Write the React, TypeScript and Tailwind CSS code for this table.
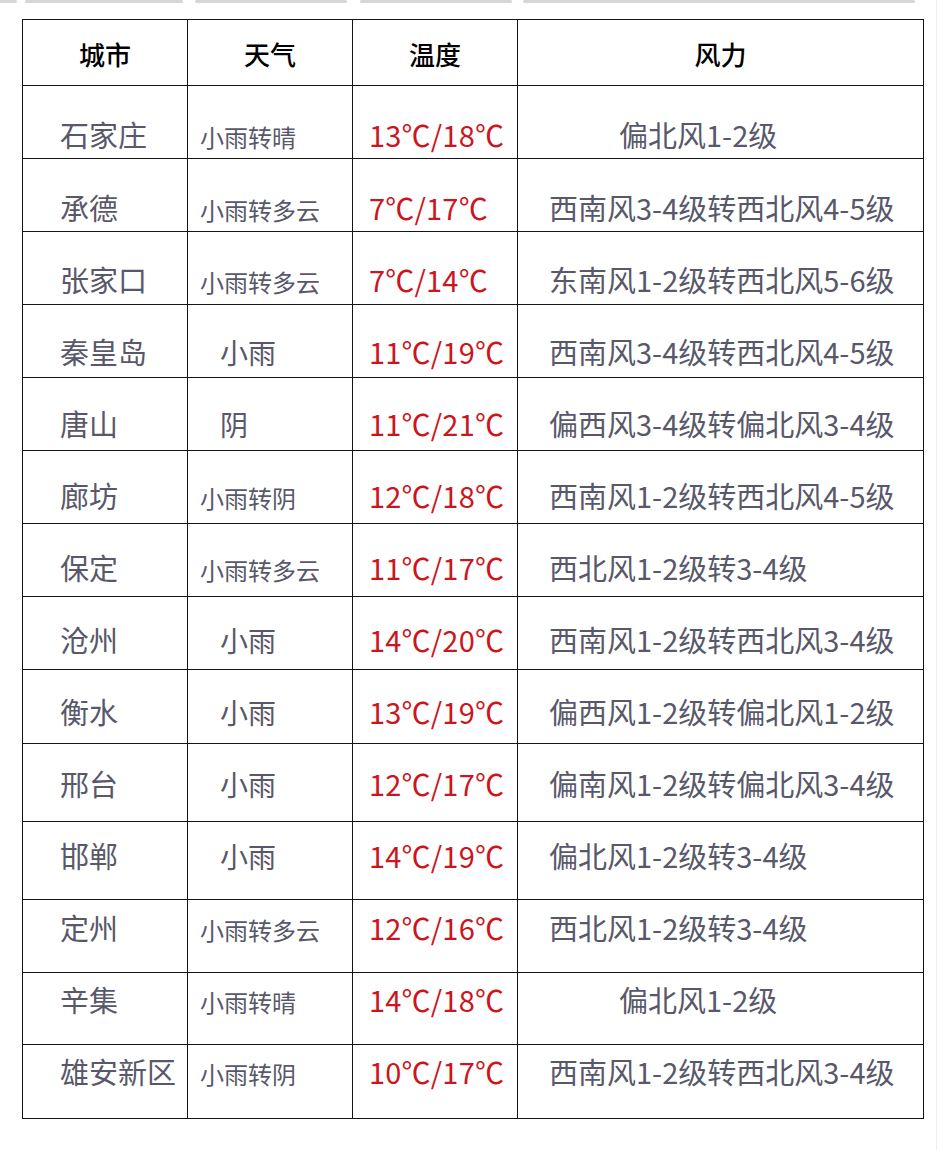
type Row = {
  city: string
  weather: string
  temp: string
  wind: string
  h: string
  pt: string
}

const rows: Row[] = [
  { city: '石家庄', weather: '小雨转晴', temp: '13℃/18℃', wind: '偏北风1-2级', h: 'h-[73px]', pt: 'pt-[34px]' },
  { city: '承德', weather: '小雨转多云', temp: '7℃/17℃', wind: '西南风3-4级转西北风4-5级', h: 'h-[73px]', pt: 'pt-[34px]' },
  { city: '张家口', weather: '小雨转多云', temp: '7℃/14℃', wind: '东南风1-2级转西北风5-6级', h: 'h-[73px]', pt: 'pt-[33px]' },
  { city: '秦皇岛', weather: '小雨', temp: '11℃/19℃', wind: '西南风3-4级转西北风4-5级', h: 'h-[73px]', pt: 'pt-[32px]' },
  { city: '唐山', weather: '阴', temp: '11℃/21℃', wind: '偏西风3-4级转偏北风3-4级', h: 'h-[73px]', pt: 'pt-[31px]' },
  { city: '廊坊', weather: '小雨转阴', temp: '12℃/18℃', wind: '西南风1-2级转西北风4-5级', h: 'h-[73px]', pt: 'pt-[30px]' },
  { city: '保定', weather: '小雨转多云', temp: '11℃/17℃', wind: '西北风1-2级转3-4级', h: 'h-[73px]', pt: 'pt-[29px]' },
  { city: '沧州', weather: '小雨', temp: '14℃/20℃', wind: '西南风1-2级转西北风3-4级', h: 'h-[73px]', pt: 'pt-[28px]' },
  { city: '衡水', weather: '小雨', temp: '13℃/19℃', wind: '偏西风1-2级转偏北风1-2级', h: 'h-[74px]', pt: 'pt-[27px]' },
  { city: '邢台', weather: '小雨', temp: '12℃/17℃', wind: '偏南风1-2级转偏北风3-4级', h: 'h-[78px]', pt: 'pt-[25px]' },
  { city: '邯郸', weather: '小雨', temp: '14℃/19℃', wind: '偏北风1-2级转3-4级', h: 'h-[78px]', pt: 'pt-[19px]' },
  { city: '定州', weather: '小雨转多云', temp: '12℃/16℃', wind: '西北风1-2级转3-4级', h: 'h-[73px]', pt: 'pt-[13px]' },
  { city: '辛集', weather: '小雨转晴', temp: '14℃/18℃', wind: '偏北风1-2级', h: 'h-[72px]', pt: 'pt-[12px]' },
  { city: '雄安新区', weather: '小雨转阴', temp: '10℃/17℃', wind: '西南风1-2级转西北风3-4级', h: 'h-[74px]', pt: 'pt-[12px]' },
]

const cell = 'border border-[#141414] align-baseline p-0 leading-[28px] whitespace-nowrap'

export default function App() {
  return (
    <div className="relative h-[1150px] w-[944px] overflow-hidden bg-white font-['Noto_Sans_CJK_SC','Noto_Sans',sans-serif]">
      {/* strip of the previous image at the top */}
      <div className="flex h-[3px]">
        <div className="w-[17px] rounded-r-full bg-[#d6d6d6]" />
        <div className="ml-[8px] w-[158px] rounded-full bg-[#d6d6d6]" />
        <div className="ml-[12px] w-[152px] rounded-full bg-[#d6d6d6]" />
        <div className="ml-[13px] w-[152px] rounded-full bg-[#d6d6d6]" />
        <div className="ml-[11px] w-[392px] rounded-full bg-[#d6d6d6]" />
      </div>
      <div className="absolute top-0 right-[7px] h-full w-px bg-[#ededed]" />

      <table className="mt-[16px] ml-[22px] w-[901px] table-fixed border-collapse">
        <colgroup>
          <col className="w-[165px]" />
          <col className="w-[165px]" />
          <col className="w-[165px]" />
          <col className="w-[406px]" />
        </colgroup>
        <thead>
          <tr className="h-[66px]">
            {['城市', '天气', '温度', '风力'].map((t) => (
              <th
                key={t}
                className="border border-[#141414] p-0 pt-[3px] text-center align-middle text-[26px] leading-[28px] font-medium text-black"
              >
                {t}
              </th>
            ))}
          </tr>
        </thead>
        <tbody>
          {rows.map((r) => {
            const single = r.weather.length <= 2
            const short = r.wind === '偏北风1-2级'
            return (
              <tr key={r.city} className={r.h}>
                <td className={`${cell} ${r.pt} pl-[37px] text-[29px] text-[#58586a]`}>{r.city}</td>
                <td
                  className={`${cell} ${r.pt} text-[#58586a] ${single ? 'pl-[32px] text-[28px]' : 'pl-[12px] text-[24px]'}`}
                >
                  {r.weather}
                </td>
                <td className={`${cell} ${r.pt} pl-[16px] text-[29px] tracking-[0.2px] text-[#cc1520]`}>{r.temp}</td>
                <td className={`${cell} ${r.pt} text-[29px] text-[#58586a] ${short ? 'pl-[101px]' : 'pl-[31px]'}`}>
                  {r.wind}
                </td>
              </tr>
            )
          })}
        </tbody>
      </table>
    </div>
  )
}
